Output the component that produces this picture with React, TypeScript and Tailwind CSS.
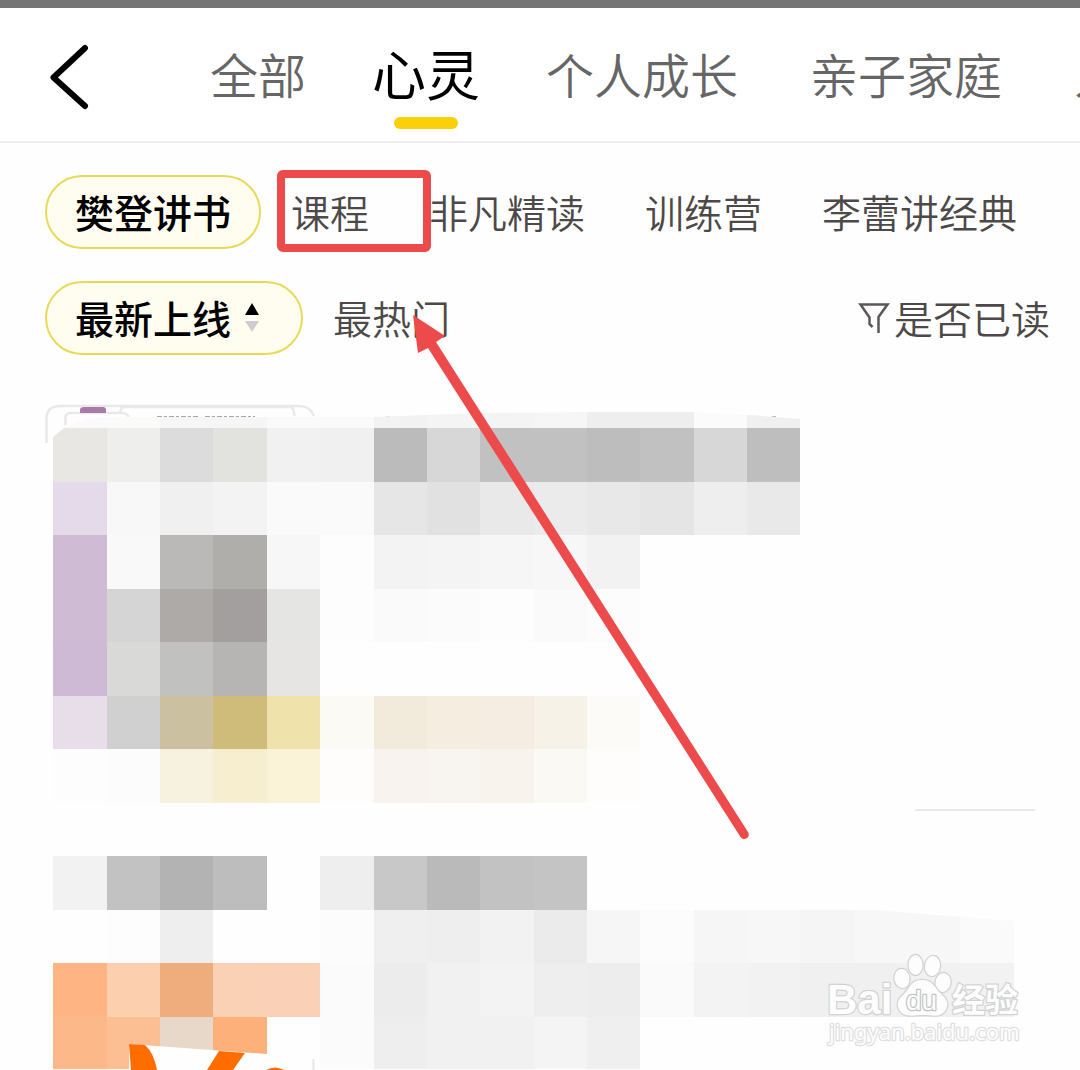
import { useState } from "react";

interface MosaicRow {
  row: number;
  cells: string[];
}

const tabs = ["全部", "心灵", "个人成长", "亲子家庭", "人文"];
const categories = ["樊登讲书", "课程", "非凡精读", "训练营", "李蕾讲经典"];

// An empty string leaves the page background showing.
const mosaic: MosaicRow[] = [
  {
    row: 8,
    cells: ["#e9e7e3", "#eeeeec", "#dcdcdc", "#e2e2df", "#f1f1f1", "#f0f0f0", "#bbbbbb", "#d7d7d7", "#c1c1c1", "#c1c1c1", "#bdbdbd", "#c1c1c1", "#d7d7d7", "#bebebe"],
  },
  {
    row: 9,
    cells: ["#e4dae9", "#f8f8f8", "#f0f0f0", "#f3f3f3", "#fafafa", "#fafafa", "#e6e6e6", "#e1e1e1", "#e9e9e9", "#ebebeb", "#e8e8e8", "#e5e5e5", "#eeeeee", "#e9e9e9"],
  },
  {
    row: 10,
    cells: ["#d0bbd4", "#f9f9f9", "#bab9b7", "#afaeab", "#f7f7f7", "#fdfdfd", "#f3f3f3", "#f4f4f4", "#f6f6f6", "#f7f7f7", "#f2f2f2"],
  },
  {
    row: 11,
    cells: ["#d0bbd4", "#d5d5d5", "#aeaaa8", "#a39f9e", "#e5e5e3", "#fdfdfd", "#fafafa", "#fbfbfb", "#fdfdfd", "#fafafa", "#fcfcfc"],
  },
  {
    row: 12,
    cells: ["#cfbad5", "#d9d9d7", "#c1c1c0", "#b6b5b4", "#e6e5e4"],
  },
  {
    row: 13,
    cells: ["#e8deea", "#d1d0d0", "#cbc1a1", "#cfbc7b", "#f0e2ab", "#fcfaf5", "#f2eadb", "#f4ede0", "#f5ede1", "#f6f2e8", "#fcfbf7"],
  },
  {
    row: 14,
    cells: ["#fdfdfd", "#fcfcfc", "#f7f2df", "#f6eece", "#faf3d8", "#fefdfb", "#f8f3ef", "#f8f5f0", "#f8f3ec", "#fbf9f4", "#fefdfb"],
  },
  {
    row: 16,
    cells: ["#f2f2f2", "#c2c2c2", "#b3b3b3", "#bdbdbd", "", "#eeeeee", "#c8c8c8", "#bababa", "#c2c2c2", "#c4c4c4"],
  },
  {
    row: 17,
    cells: ["", "#fdfdfd", "#eeeeee", "", "", "#fcfcfc", "#efefef", "#eeeeee", "#f2f2f2", "#ebebeb", "#f6f6f6", "#fcfcfc", "#f6f6f6", "#f7f7f7", "#f5f5f5", "#f7f7f7", "#f7f7f7", "#fafafa"],
  },
  {
    row: 18,
    cells: ["#feb483", "#fccfae", "#efac7d", "#fbd1b5", "#fad1b6", "#fbfbfb", "#ececec", "#f1f1f1", "#f3f3f3", "#eeeeee", "#ededed", "#fafafa", "#f3f3f3", "#f2f2f2", "#f0f0f0", "#f0f0f0", "#f1f1f1", "#f2f2f2"],
  },
  {
    row: 19,
    cells: ["#fdb88a", "#fbbf93", "#e8d8ca", "#fdb07a", "", "#fbfbfb", "#eeeeee", "#f1f1f1", "#f1f1f1", "#f4f4f4", "#efefef"],
  },
];

const topEdge = ["#faf9fb", "#fbfbfb", "#f6f6f6", "#f6f6f6", "#fafafa", "#fafafa", "#f2f2f2", "#f4f4f4", "#f4f4f4", "#f6f6f6", "#eeeeee", "#eeeeee", "#fbfbfb", "#f0f0f0"];

const colX = (col: number) => Math.round(col * 53.36);
const rowY = (row: number) => Math.round(row * 53.5);

function BookList() {
  return (
    <svg
      viewBox="0 395 1080 675"
      className="mt-10 block w-full"
      role="img"
      aria-label="书单"
    >
      <defs>
        <clipPath id="mosaic-edge">
          <path d="M53 1069V437L64 428L86 419L112 417H374L480 413L587 412H694L750 415L801 419V909H860L1015 921V1069Z" />
        </clipPath>
      </defs>

      {/* Cover of the first book */}
      <g fill="none" stroke="#e9e9e9" strokeWidth="2.5">
        <path d="M46.500 443V419Q46.500 406 60 406H299Q310 406 314 416" />
        <path d="M65.500 425V417Q66 413 71 413H121Q127 413 129 417" />
        <path d="M120 412Q121 407 125 407H290Q294 407 294.500 416" />
      </g>
      <path d="M80 413V410Q80 407 84 407H103Q106 407 106 410V413Z" fill="#a57ca8" />
      <path d="M157 416.500H200M205 416.500H255" stroke="#a8a8a8" strokeWidth="1" strokeDasharray="5 2 3 2" />
      <path d="M386 417H390M772 416.500H776" stroke="#bbbbbb" strokeWidth="1" />

      <g clipPath="url(#mosaic-edge)" shapeRendering="crispEdges">
        {topEdge.map((fill, index) => (
          <rect
            key={index}
            x={colX(index + 1)}
            y={410}
            width={colX(index + 2) - colX(index + 1)}
            height={18}
            fill={fill}
          />
        ))}
        {mosaic.map(({ row, cells }) =>
          cells.map((fill, index) =>
            fill ? (
              <rect
                key={`${row}-${index}`}
                x={colX(index + 1)}
                y={rowY(row)}
                width={colX(index + 2) - colX(index + 1)}
                height={rowY(row + 1) - rowY(row)}
                fill={fill}
              />
            ) : null
          )
        )}
      </g>

      <path d="M915 810H1035" stroke="#e9e9e9" strokeWidth="2" />

      {/* Cover of the second book */}
      <path d="M129 1044L267 1054V1070H129Z" fill="#fefefe" />
      <g fill="#ff6d00">
        <path d="M129 1044L145 1045Q154 1053 157 1070H131Z" />
        <path d="M219 1051L245 1053L233 1070H207Z" />
        <path d="M266 1070Q275 1065 284 1070Z" />
      </g>
      <path d="M313.500 1059V1070" stroke="#e6e6e6" strokeWidth="2" />

      {/* Watermark */}
      <g fill="#fdfdfd" stroke="#d2d2d2" strokeWidth="2.5" paintOrder="stroke" strokeLinejoin="round">
        <text x="827" y="1014" fontSize="42" fontWeight="700" fontFamily="'Liberation Sans', sans-serif">
          Bai
        </text>
        <ellipse cx="902" cy="978.500" rx="7.500" ry="9.500" transform="rotate(-8 902 978.500)" />
        <ellipse cx="915.500" cy="965" rx="7" ry="10" />
        <ellipse cx="932.500" cy="966" rx="7.500" ry="10" transform="rotate(8 932.500 966)" />
        <ellipse cx="943" cy="982.500" rx="7.500" ry="9.500" transform="rotate(10 943 982.500)" />
        <path d="M922 980C911 980 910 988 904 994C897 1000 896 1005 900 1011C905 1018 914 1015 923 1015C932 1015 940 1018 945 1011C949 1005 948 1000 941 994C934 987 933 980 922 980Z" />
        <text x="906" y="1010" fontSize="28" stroke="#c4c4c4" fontFamily="'Liberation Sans', sans-serif">
          du
        </text>
        <text x="952" y="1012" fontSize="33" fontWeight="700" fontFamily="'Noto Sans CJK SC', sans-serif">
          经验
        </text>
        <text x="829" y="1040" fontSize="22" stroke="#e0e0e0" fontFamily="'Noto Sans', sans-serif">
          jingyan.baidu.com
        </text>
      </g>
    </svg>
  );
}

export default function App() {
  const [activeTab, setActiveTab] = useState("心灵");
  const [category, setCategory] = useState("樊登讲书");
  const [sort, setSort] = useState("最新上线");

  return (
    <main className="relative min-h-screen overflow-hidden bg-[#fefefe] font-['Noto_Sans_CJK_SC',sans-serif]">
      <div className="h-2 bg-[#757575]" />

      {/* Tabs */}
      <header className="flex h-[135px] items-center border-b-2 border-[#ececec] bg-white pl-12">
        <button aria-label="返回" className="w-[162px] shrink-0 pt-1">
          <svg width="44" height="66" viewBox="0 0 44 66" fill="none" stroke="#000" strokeWidth="6">
            <path d="M37 4L5.500 33.500L37 62" strokeLinecap="round" strokeLinejoin="round" />
          </svg>
        </button>
        <nav className="flex h-full gap-[72px]">
          {tabs.map((tab) => (
            <button
              key={tab}
              onClick={() => setActiveTab(tab)}
              className={`relative shrink-0 pb-1 whitespace-nowrap ${
                activeTab === tab
                  ? "-mx-[6px] text-[54px] text-black"
                  : "text-[48px] font-[350] text-[#666]"
              }`}
            >
              {tab}
              {activeTab === tab && (
                <span className="absolute bottom-3 left-1/2 h-3 w-16 -translate-x-1/2 rounded-full bg-[#f9d00a]" />
              )}
            </button>
          ))}
        </nav>
      </header>

      {/* Categories */}
      <div className="mt-8 flex pl-[45px]">
        {categories.map((item) => (
          <button
            key={item}
            onClick={() => setCategory(item)}
            className={`relative h-[74px] shrink-0 rounded-full border-2 px-7 pb-0.5 text-[39px] leading-none whitespace-nowrap ${
              category === item
                ? "border-[#e8da58] bg-[#fffdf0] font-medium text-black"
                : "border-transparent font-[350] text-[#4c4948]"
            }`}
          >
            {item}
            {item === "课程" && (
              <span className="absolute -top-[7px] left-[14px] z-10 h-[82px] w-[154px] rounded-md border-8 border-[#ed4b4b]" />
            )}
          </button>
        ))}
      </div>

      {/* Sorting */}
      <div className="mt-8 flex items-center pr-[30px] pl-[45px]">
        <button
          onClick={() => setSort("最新上线")}
          className={`flex h-[74px] shrink-0 items-center gap-3 rounded-full border-2 pr-10 pb-0.5 pl-7 text-[39px] leading-none whitespace-nowrap ${
            sort === "最新上线"
              ? "border-[#e8da58] bg-[#fffdf0] font-medium text-black"
              : "border-transparent font-[350] text-[#4c4948]"
          }`}
        >
          最新上线
          <svg width="18" height="32" viewBox="0 0 18 32">
            <path d="M9 2L16 14H2Z" fill="#000" />
            <path d="M2 20H16L9 31Z" fill="#d0cbcd" />
          </svg>
        </button>
        <button
          onClick={() => setSort("最热门")}
          className={`h-[74px] shrink-0 rounded-full border-2 px-7 pb-0.5 text-[39px] leading-none whitespace-nowrap ${
            sort === "最热门"
              ? "border-[#e8da58] bg-[#fffdf0] font-medium text-black"
              : "border-transparent font-[350] text-[#4c4948]"
          }`}
        >
          最热门
        </button>
        <button className="ml-auto flex h-[74px] shrink-0 items-center gap-1 pb-0.5 text-[39px] leading-none font-[350] whitespace-nowrap text-[#4c4948]">
          <svg width="32" height="32" viewBox="0 0 32 32" fill="none" stroke="#5c5857" strokeWidth="2.5">
            <path d="M14.500 26L11.500 23V16.500L2.500 3.500H29.500L20.500 16V32" />
          </svg>
          是否已读
        </button>
      </div>

      <BookList />

      {/* Arrow */}
      <svg
        viewBox="0 0 1080 1070"
        className="pointer-events-none absolute top-0 left-0 w-full"
        aria-hidden="true"
      >
        <path
          d="M413 315L445 336L436 342L748 832A4.500 4.500 0 0 1 740.500 837L428 348L418 353Z"
          fill="#ed4b4b"
        />
      </svg>
    </main>
  );
}
